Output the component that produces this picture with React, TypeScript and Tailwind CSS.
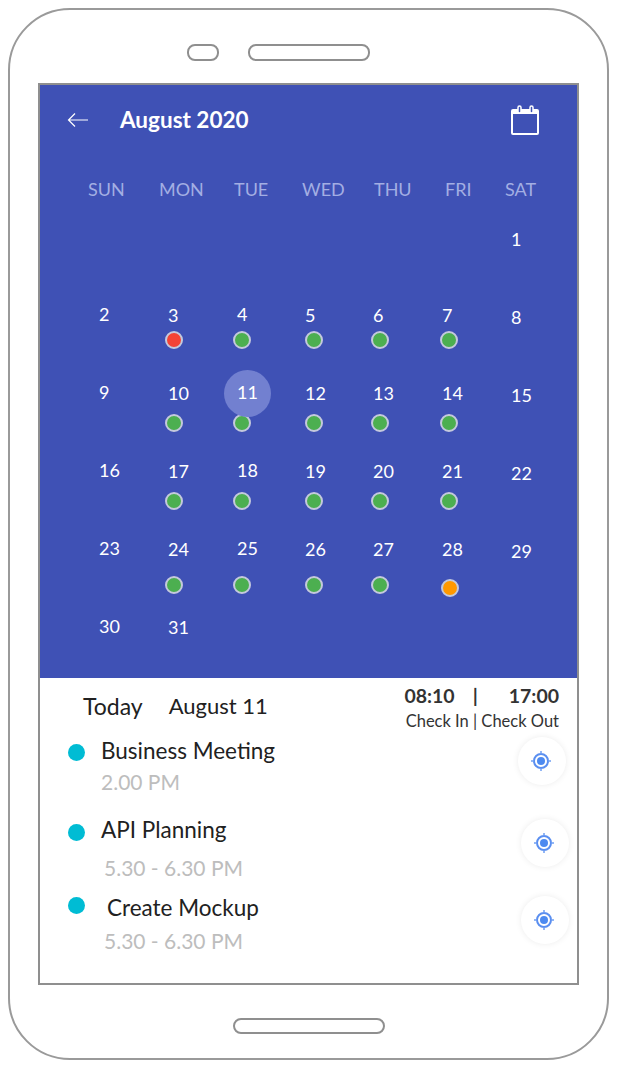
type Day = { n: number; dot?: string; today?: boolean };

const green = "bg-[#4caf50]";
const red = "bg-[#f44336]";
// the orange dot sits a little off the grid in the mockup
const orange = "bg-[#ff9800] relative top-[3px] left-[1px]";

// margin between number and dot changes from week to week in the mockup
const dotGap = ["mt-[4px]", "mt-[9px]", "mt-[9px]", "mt-[15px]"];

const weekdays = ["SUN", "MON", "TUE", "WED", "THU", "FRI", "SAT"];

const columns: { cls: string; numCls: string; days: (Day | null)[] }[] = [
  {
    cls: "pt-[24px]",
    numCls: "pl-0 -top-[1px]",
    days: [null, { n: 2 }, { n: 9 }, { n: 16 }, { n: 23 }, { n: 30 }],
  },
  {
    cls: "pt-[24px]",
    numCls: "pl-[3px]",
    days: [
      null,
      { n: 3, dot: red },
      { n: 10, dot: green },
      { n: 17, dot: green },
      { n: 24, dot: green },
      { n: 31 },
    ],
  },
  {
    cls: "pt-[24px]",
    numCls: "pl-[4px] -top-[1px]",
    days: [
      null,
      { n: 4, dot: green },
      { n: 11, dot: green, today: true },
      { n: 18, dot: green },
      { n: 25, dot: green },
    ],
  },
  {
    cls: "pt-[24px]",
    numCls: "pl-0",
    days: [
      null,
      { n: 5, dot: green },
      { n: 12, dot: green },
      { n: 19, dot: green },
      { n: 26, dot: green },
    ],
  },
  {
    cls: "pt-[24px]",
    numCls: "pl-[2px]",
    days: [
      null,
      { n: 6, dot: green },
      { n: 13, dot: green },
      { n: 20, dot: green },
      { n: 27, dot: green },
    ],
  },
  {
    cls: "pt-[24px]",
    numCls: "pl-[2px]",
    days: [
      null,
      { n: 7, dot: green },
      { n: 14, dot: green },
      { n: 21, dot: green },
      { n: 28, dot: orange },
    ],
  },
  {
    cls: "pt-[26px]",
    numCls: "pl-0",
    days: [{ n: 1 }, { n: 8 }, { n: 15 }, { n: 22 }, { n: 29 }],
  },
];

const events = [
  {
    title: "Business Meeting",
    time: "2.00 PM",
    rowCls: "h-[79px]",
    dotCls: "mt-[7px]",
    titleCls: "ml-[16px]",
    timeCls: "ml-[16px] mt-[3px]",
    btnCls: "mr-[11px] mt-0",
  },
  {
    title: "API Planning",
    time: "5.30 - 6.30 PM",
    rowCls: "h-[78px]",
    dotCls: "mt-[8px]",
    titleCls: "ml-[16px]",
    timeCls: "ml-[19px] mt-[10px]",
    btnCls: "mr-[8px] mt-[3px]",
  },
  {
    title: "Create Mockup",
    time: "5.30 - 6.30 PM",
    rowCls: "h-[80px]",
    dotCls: "mt-[3px]",
    titleCls: "ml-[22px]",
    timeCls: "ml-[19px] mt-[5px]",
    btnCls: "mr-[8px] mt-[2px]",
  },
];

function CalendarIcon() {
  return (
    <svg width="30" height="32" viewBox="0 0 30 32" fill="none" className="text-white">
      <rect x="2" y="6" width="26" height="24" rx="1" stroke="currentColor" strokeWidth="2" />
      <rect x="2" y="6" width="26" height="4" fill="currentColor" />
      <rect x="8" y="2" width="3" height="7" rx="1.5" fill="#3f51b5" stroke="currentColor" strokeWidth="1.5" />
      <rect x="20" y="2" width="3" height="7" rx="1.5" fill="#3f51b5" stroke="currentColor" strokeWidth="1.5" />
    </svg>
  );
}

function BackArrow() {
  return (
    <svg width="22" height="16" viewBox="0 0 22 16" fill="none" stroke="white" strokeWidth="1.2">
      <path d="M21 8H1.5M8 1.5 1.5 8 8 14.5" />
    </svg>
  );
}

function LocateIcon() {
  return (
    <svg width="22" height="22" viewBox="0 0 22 22" fill="none" className="-translate-x-px">
      <circle cx="11" cy="11" r="7" stroke="#5b8ff0" strokeWidth="2" />
      <circle cx="11" cy="11" r="4" fill="#4d8af0" />
      <path d="M11 1v3M11 18v3M1 11h3M18 11h3" stroke="#6f9ef2" strokeWidth="1.5" />
    </svg>
  );
}

export default function App() {
  return (
    <div className="w-[618px] h-[1065px] bg-white pt-2 pl-2 font-['Lato',sans-serif] overflow-hidden">
      <div className="w-[601px] h-[1052px] border-2 border-[#9a9a9a] rounded-[62px] flex flex-col items-center">
        {/* top sensors */}
        <div className="flex items-center mt-[34px] ml-[-61px] gap-[29px]">
          <div className="w-[32px] h-[17px] border-2 border-[#8f8f8f] rounded-[8px]" />
          <div className="w-[122px] h-[17px] border-2 border-[#8f8f8f] rounded-[8px]" />
        </div>

        {/* screen */}
        <div className="w-[541px] h-[902px] mt-[22px] border-2 border-[#8f8f8f] flex flex-col">
          <div className="h-[593px] bg-[#3f51b5] shrink-0">
            <div className="flex items-center h-[70px] pl-[27px]">
              <BackArrow />
              <span className="ml-[31px] text-[22.5px] leading-none font-bold text-white">August 2020</span>
              <div className="ml-auto mr-[37px]">
                <CalendarIcon />
              </div>
            </div>

            <div className="grid grid-cols-[71px_75px_68px_72px_71px_60px_40px] pl-[48px] mt-[22px] text-[18px] leading-[24px] text-[#a3aee3]">
              {weekdays.map((d) => (
                <span key={d}>{d}</span>
              ))}
            </div>

            <div className="grid grid-cols-[66px_68px_72px_66px_69px_71px_60px] pl-[59px] text-white text-[18px] leading-[24px]">
              {columns.map((col, i) => (
                <div key={i} className={col.cls}>
                  {col.days.map((day, w) => (
                    <div key={w} className="h-[78px]">
                      {day && (
                        <>
                          <div className={`relative ${col.numCls}`}>
                            {day.today && (
                              <span className="absolute left-[-9px] top-[-10px] w-[47px] h-[47px] rounded-full bg-[#7280d0]" />
                            )}
                            <span className="relative">{day.n}</span>
                          </div>
                          {day.dot && (
                            <div
                              className={`${dotGap[w - 1]} w-[18px] h-[18px] rounded-full border-2 border-[#c4c9dd] ${day.dot}`}
                            />
                          )}
                        </>
                      )}
                    </div>
                  ))}
                </div>
              ))}
            </div>
          </div>

          <div className="flex-1 bg-white">
            <div className="flex items-start h-[59px]">
              <span className="ml-[43px] mt-[13px] text-[23px] leading-[30px] text-[#212121]">Today</span>
              <span className="ml-[26px] mt-[13px] text-[22px] leading-[30px] text-[#212121]">August 11</span>
              <div className="ml-auto mr-[18px] mt-[5px] flex flex-col items-end text-[#333]">
                <div className="flex text-[19.5px] leading-[26px] font-bold">
                  <span>08:10</span>
                  <span className="ml-[18px]">|</span>
                  <span className="ml-[31px]">17:00</span>
                </div>
                <span className="text-[16.5px] leading-[24px]">Check In | Check Out</span>
              </div>
            </div>

            {events.map((e) => (
              <div key={e.title} className={`flex items-start ${e.rowCls}`}>
                <div className={`ml-[28px] w-[17px] h-[17px] rounded-full bg-[#00bcd4] shrink-0 ${e.dotCls}`} />
                <div className="flex-1 ml-[-17px]">
                  <div className={`${e.titleCls} text-[22.5px] leading-[28px] text-[#212121] pl-[17px]`}>{e.title}</div>
                  <div className={`${e.timeCls} text-[21px] leading-[28px] text-[#bdbdbd] pl-[17px]`}>{e.time}</div>
                </div>
                <div
                  className={`w-[48px] h-[48px] rounded-full bg-white shadow-[0_0_6px_rgba(0,0,0,0.08)] flex items-center justify-center ${e.btnCls}`}
                >
                  <LocateIcon />
                </div>
              </div>
            ))}
          </div>
        </div>

        {/* home button */}
        <div className="w-[152px] h-[16px] mt-[33px] border-2 border-[#8f8f8f] rounded-[8px]" />
      </div>
    </div>
  );
}
